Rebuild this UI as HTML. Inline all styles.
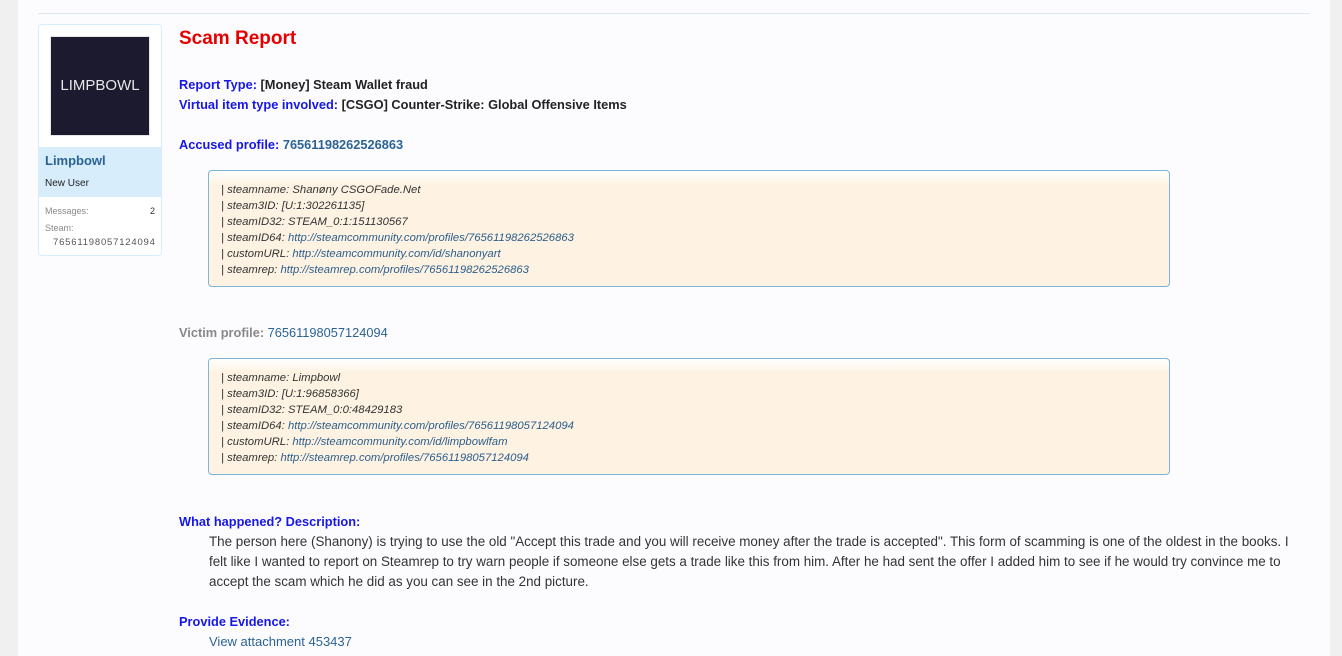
<!DOCTYPE html>
<html><head><meta charset="utf-8"><style>
body{margin:0;width:1342px;height:656px;overflow:hidden;background:#f0f0f0;font-family:"Liberation Sans",sans-serif;}
.page{position:absolute;left:18px;top:0;width:1312px;height:656px;background:#fcfcff;}
.hr{position:absolute;left:20px;top:13px;width:1272px;height:1px;background:#dce7f0;}
.side{position:absolute;left:38px;top:24px;width:122px;height:230px;border:1px solid #d7edfc;border-radius:4px;background:#fff;}
.av{position:absolute;left:11px;top:11px;width:98px;height:98px;background:#1b1a2e;border:1px solid #e6e6e6;color:#e8e8e8;font-size:15px;letter-spacing:0px;line-height:98px;text-align:center;font-weight:300;}
.blue{position:absolute;left:0;top:122px;width:122px;height:50px;background:#d7edfc;}
.t{position:absolute;white-space:nowrap;}
.box{position:absolute;left:208px;width:962px;height:117px;border:1px solid #7fb4d6;border-radius:4px;background:linear-gradient(#fff 0,#fef3e2 14px,#fef3e2);font-style:italic;font-size:11.3px;color:#333;}
.box div{height:16px;line-height:16px;white-space:nowrap;}
.box a{color:#2b5e8c;}
.lb{color:#1616e8;font-weight:bold;font-size:12.8px;}
.v{color:#222;font-weight:bold;}
.lk{color:#2b6395;}
</style></head><body>
<div class="page"></div>
<div class="hr" style="left:38px"></div>
<div class="side">
<div class="av">LIMPBOWL</div>
<div class="blue"></div>
<div class="t" style="left:6px;top:128px;font-size:13px;font-weight:bold;color:#2b6395">Limpbowl</div>
<div class="t" style="left:6px;top:153px;font-size:10px;color:#222">New User</div>
<div class="t" style="left:6px;top:181px;font-size:9px;color:#888">Messages:</div>
<div class="t" style="left:111px;top:181px;font-size:9px;color:#333">2</div>
<div class="t" style="left:6px;top:198px;font-size:9px;color:#888">Steam:</div>
<div class="t" style="left:14px;top:212px;font-size:9.5px;color:#555;letter-spacing:.8px">76561198057124094</div>
</div>
<div class="t" style="left:179px;top:28px;font-size:19px;font-weight:bold;color:#e60000">Scam Report</div>
<div class="t lb" style="left:179px;top:77px">Report Type: <span class="v">[Money] Steam Wallet fraud</span></div>
<div class="t lb" style="left:179px;top:97px">Virtual item type involved: <span class="v">[CSGO] Counter-Strike: Global Offensive Items</span></div>
<div class="t lb" style="left:179px;top:137px">Accused profile: <span class="lk">76561198262526863</span></div>
<div class="box" style="top:170px;padding-top:11px;box-sizing:border-box;padding-left:12px">
<div>| steamname: Shanøny CSGOFade.Net</div>
<div>| steam3ID: [U:1:302261135]</div>
<div>| steamID32: STEAM_0:1:151130567</div>
<div>| steamID64: <a>http://steamcommunity.com/profiles/76561198262526863</a></div>
<div>| customURL: <a>http://steamcommunity.com/id/shanonyart</a></div>
<div>| steamrep: <a>http://steamrep.com/profiles/76561198262526863</a></div>
</div>
<div class="t lb" style="left:179px;top:325px;color:#888">Victim profile: <span class="lk" style="font-weight:normal">76561198057124094</span></div>
<div class="box" style="top:358px;padding-top:11px;box-sizing:border-box;padding-left:12px">
<div>| steamname: Limpbowl</div>
<div>| steam3ID: [U:1:96858366]</div>
<div>| steamID32: STEAM_0:0:48429183</div>
<div>| steamID64: <a>http://steamcommunity.com/profiles/76561198057124094</a></div>
<div>| customURL: <a>http://steamcommunity.com/id/limpbowlfam</a></div>
<div>| steamrep: <a>http://steamrep.com/profiles/76561198057124094</a></div>
</div>
<div class="t lb" style="left:179px;top:514px">What happened? Description:</div>
<div class="t" style="left:209px;top:532px;font-size:13.4px;color:#333;line-height:20px">The person here (Shanony) is trying to use the old "Accept this trade and you will receive money after the trade is accepted". This form of scamming is one of the oldest in the books. I<br>felt like I wanted to report on Steamrep to try warn people if someone else gets a trade like this from him. After he had sent the offer I added him to see if he would try convince me to<br>accept the scam which he did as you can see in the 2nd picture.</div>
<div class="t lb" style="left:179px;top:614px">Provide Evidence:</div>
<div class="t lk" style="left:209px;top:634px;font-size:13px">View attachment 453437</div>
</body></html>
